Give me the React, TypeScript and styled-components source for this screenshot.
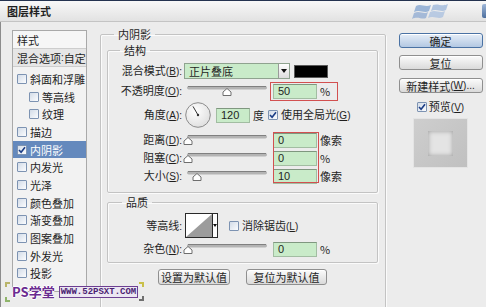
import React from "react";
import styled, { createGlobalStyle } from "styled-components";

const GlobalStyle = createGlobalStyle`
  html, body { margin: 0; padding: 0; background: #ececec; }
  body {
    font-family: "Noto Sans CJK SC", "Liberation Sans", sans-serif;
    font-size: 11px;
    color: #1f1f1f;
  }
`;

const Dialog = styled.div`
  position: relative;
  width: 486px;
  height: 307px;
  overflow: hidden;
  background: #ececec;
  box-shadow: inset 1px 0 0 #8c8c8c;
`;

const TitleBar = styled.div`
  height: 22px;
  box-sizing: border-box;
  border-top: 1px solid #243350;
  border-bottom: 1px solid #c4c4c4;
  background: linear-gradient(#f8f8f8, #e2e2e2);
  display: flex;
  align-items: center;
  padding-left: 7px;
`;

const Title = styled.div`
  flex: 1;
  font-weight: 700;
  font-size: 11px;
  line-height: 12px;
`;

const WinLogo = styled.svg`
  margin-right: 26px;
  opacity: 0.75;
`;

const CloseStub = styled.div`
  width: 4px;
  height: 14px;
  background: linear-gradient(#9fb7d8, #4d6f9e);
  border-radius: 2px 0 0 2px;
`;

const Body = styled.div`
  display: flex;
  align-items: flex-start;
  padding: 5px 0 0 12px;
`;

/* latin bits (hotkeys, colons) use a proportional latin face */
const Latin = styled.span`
  font-family: "Liberation Sans", sans-serif;
  font-size: 10px;
`;

const Hot = ({ k, colon }: { k: string; colon?: boolean }) => (
  <Latin>
    (<u>{k}</u>){colon ? ":" : ""}
  </Latin>
);

/* ---------- left style list ---------- */

const StyleList = styled.div`
  width: 75px;
  height: 262px;
  margin-top: 3px;
  flex-shrink: 0;
  box-sizing: border-box;
  border: 1px solid #a9a9a9;
  background: #f2f2f2;
  overflow: hidden;
`;

const ListHead = styled.div<{ $shade?: boolean }>`
  height: 18px;
  box-sizing: border-box;
  padding-left: 4px;
  display: flex;
  align-items: center;
  line-height: 12px;
  white-space: nowrap;
  background: ${(p) => (p.$shade ? "#e6e6e6" : "#f6f6f6")};
  border-bottom: 1px solid #cdcdcd;
`;

const ListItems = styled.div`
  padding-top: 3px;
`;

const ListItem = styled.div<{ $sub?: boolean; $sel?: boolean }>`
  height: 17.7px;
  display: flex;
  align-items: center;
  gap: 3px;
  padding-left: ${(p) => (p.$sub ? 16 : 4)}px;
  white-space: nowrap;
  line-height: 12px;
  background: ${(p) => (p.$sel ? "#6489bd" : "transparent")};
  color: ${(p) => (p.$sel ? "#ffffff" : "#1f1f1f")};
`;

/* ---------- checkbox ---------- */

const CheckBox = styled.span`
  width: 10px;
  height: 10px;
  box-sizing: border-box;
  flex-shrink: 0;
  display: inline-flex;
  align-items: center;
  justify-content: center;
  border: 1px solid #7d93b2;
  border-radius: 1px;
  background: linear-gradient(135deg, #d3dce8, #fbfcfe);
`;

const Check = ({ on }: { on?: boolean }) => (
  <CheckBox>
    {on && (
      <svg width="8" height="8" viewBox="0 0 8 8">
        <path d="M1 4 L3.1 6.3 L7 1.3" fill="none" stroke="#1b3d86" strokeWidth="1.6" />
      </svg>
    )}
  </CheckBox>
);

/* ---------- main panel ---------- */

type GroupProps = { $h?: number; $mt?: number; $pt?: number; $pb?: number; $pl?: number; $pr?: number };

const Group = styled.fieldset<GroupProps>`
  position: relative;
  margin: ${(p) => p.$mt ?? 0}px 0 0 0;
  padding: ${(p) => p.$pt ?? 0}px ${(p) => p.$pr ?? 0}px ${(p) => p.$pb ?? 0}px ${(p) => p.$pl ?? 0}px;
  min-width: 0;
  box-sizing: border-box;
  border: 1px solid #c3c3c3;
  border-radius: 2px;
  box-shadow: inset 1px 1px 0 #fbfbfb, 1px 1px 0 #fbfbfb;
  ${(p) => (p.$h ? `height: ${p.$h}px;` : "")}
`;

const Legend = styled.legend<{ $ml: number }>`
  margin-left: ${(p) => p.$ml}px;
  padding: 0 4px;
  font-size: 11px;
  line-height: 14px;
`;

const MainGroup = styled(Group)`
  width: 286px;
  margin-left: 13px;
  flex-shrink: 0;
`;

const Row = styled.div<{ $h: number; $mt?: number }>`
  height: ${(p) => p.$h}px;
  margin-top: ${(p) => p.$mt ?? 0}px;
  display: flex;
  align-items: center;
  white-space: nowrap;
  line-height: 13px;
`;

const Label = styled.span`
  width: 74px;
  flex-shrink: 0;
  text-align: right;
`;

const SelectBox = styled.div`
  width: 106px;
  height: 16px;
  margin-left: 2px;
  box-sizing: border-box;
  display: flex;
  border: 1px solid #8fa38f;
  background: #c9ebc9;
`;

const SelectText = styled.span`
  flex: 1;
  padding-left: 4px;
  line-height: 14px;
`;

const SelectArrow = styled.span`
  width: 10px;
  display: flex;
  align-items: center;
  justify-content: center;
  border-left: 1px solid #9a9a9a;
  background: linear-gradient(#ffffff, #dcdcdc);
`;

const Swatch = styled.div`
  width: 34px;
  height: 13px;
  margin-left: 4px;
  box-sizing: border-box;
  border: 1px solid #5a5a5a;
  background: #000;
`;

const SliderSvg = styled.svg`
  margin-left: 1px;
  flex-shrink: 0;
`;

const Slider = ({ at }: { at: number }) => (
  <SliderSvg width="86" height="14" viewBox="0 0 86 14">
    <rect x="4" y="2" width="80" height="3.5" rx="1.7" fill="#b4b4b4" />
    <rect x="5" y="2" width="78" height="1" fill="#808080" />
    <polygon
      points={`${at},4.5 ${at + 4},8 ${at + 4},11.5 ${at - 4},11.5 ${at - 4},8`}
      fill="#ffffff"
      stroke="#6e6e6e"
      strokeWidth="1"
    />
  </SliderSvg>
);

const NumBox = styled.span<{ $w?: number; $ml?: number }>`
  width: ${(p) => p.$w ?? 44}px;
  height: 15px;
  margin-left: ${(p) => p.$ml ?? 4}px;
  box-sizing: border-box;
  flex-shrink: 0;
  padding-left: 4px;
  font-family: "Liberation Sans", sans-serif;
  line-height: 13px;
  border: 1px solid #a2bda2;
  border-top-color: #7f977f;
  background: #c9ebc9;
`;

const Unit = styled.span`
  margin-left: 3px;
`;

const Highlight = styled.span`
  display: flex;
  align-items: center;
  margin-left: 1px;
  padding: 1px 7px 1px 2px;
  border: 1px solid #d25050;
`;

const Stack = styled.div`
  position: relative;
  margin-top: 3px;
`;

const RedFrame = styled.div`
  position: absolute;
  left: 165px;
  top: 1px;
  width: 46px;
  height: 51px;
  box-sizing: border-box;
  border: 1px solid #d25050;
`;

const Dial = styled.svg`
  margin-left: 3px;
  flex-shrink: 0;
`;

const Inline = styled.span<{ $ml: number }>`
  margin-left: ${(p) => p.$ml}px;
  display: inline-flex;
  align-items: center;
  gap: 3px;
`;

const Contour = styled.div`
  width: 33px;
  height: 25px;
  margin-left: 3px;
  box-sizing: border-box;
  display: flex;
  border: 1px solid #2a2a2a;
  background: #fff;
`;

const ContourArrow = styled.span`
  flex: 1;
  display: flex;
  align-items: center;
  justify-content: center;
  border-left: 1px solid #2a2a2a;
`;

const ButtonRow = styled.div`
  display: flex;
  justify-content: center;
  gap: 16px;
  margin-top: 6px;
`;

const Button = styled.div<{ $w?: number; $primary?: boolean }>`
  width: ${(p) => p.$w ?? 84}px;
  height: 16px;
  box-sizing: border-box;
  display: flex;
  align-items: center;
  justify-content: center;
  line-height: 12px;
  white-space: nowrap;
  border-radius: 3px;
  border: 1px solid ${(p) => (p.$primary ? "#4a72a4" : "#8f8f8f")};
  background: ${(p) =>
    p.$primary ? "linear-gradient(#e6eef8, #b3c8e2)" : "linear-gradient(#fbfbfb, #dadada)"};
  box-shadow: inset 0 1px 0 #ffffff;
`;

/* ---------- right column ---------- */

const Side = styled.div`
  width: 85px;
  margin-left: 12px;
  padding-top: 6px;
  display: flex;
  flex-direction: column;
  align-items: center;
`;

const SideButton = styled(Button)<{ $mt?: number }>`
  margin-top: ${(p) => p.$mt ?? 0}px;
  height: 15px;
`;

const PreviewToggle = styled.div`
  margin-top: 8px;
  height: 12px;
  display: flex;
  align-items: center;
  gap: 2px;
  line-height: 12px;
`;

const PreviewBox = styled.div`
  width: 55px;
  height: 50px;
  margin-top: 5px;
  box-sizing: border-box;
  display: flex;
  align-items: center;
  justify-content: center;
  border: 1px solid #e4e4e4;
  background: linear-gradient(135deg, #cecece, #c0c0c0);
`;

const PreviewSquare = styled.div`
  width: 25px;
  height: 25px;
  background: #e4e4e4;
  box-shadow: inset 0 0 5px #9c9c9c;
`;

/* ---------- watermark ---------- */

const Watermark = styled.div`
  position: absolute;
  left: 4px;
  top: 281px;
  display: flex;
  align-items: center;
`;

const Marks = styled.svg`
  flex-shrink: 0;
`;

const BrandName = styled.span`
  margin-left: 1px;
  font-weight: 700;
  font-size: 13px;
  line-height: 14px;
  color: #6a2b90;
  text-shadow: 1px 0 0 #fff, -1px 0 0 #fff, 0 1px 0 #fff, 0 -1px 0 #fff;
`;

const SiteTag = styled.span`
  margin-left: 4px;
  padding: 0 1px;
  height: 10px;
  line-height: 10px;
  font-family: "Liberation Mono", monospace;
  font-weight: 700;
  font-size: 9px;
  color: #4b1f72;
  background: #ece6f2;
  border: 1px solid #6d3f92;
`;

const items = [
  { t: "斜面和浮雕" },
  { t: "等高线", sub: true },
  { t: "纹理", sub: true },
  { t: "描边" },
  { t: "内阴影", on: true, sel: true },
  { t: "内发光" },
  { t: "光泽" },
  { t: "颜色叠加" },
  { t: "渐变叠加" },
  { t: "图案叠加" },
  { t: "外发光" },
  { t: "投影" },
];

const DownTri = ({ w = 6 }: { w?: number }) => (
  <svg width={w} height={w / 2 + 1} viewBox={`0 0 ${w} ${w / 2 + 1}`}>
    <polygon points={`0,0 ${w},0 ${w / 2},${w / 2 + 1}`} fill="#111" />
  </svg>
);

export default function App() {
  return (
    <Dialog>
      <GlobalStyle />
      <TitleBar>
        <Title>图层样式</Title>
        <WinLogo width="44" height="18" viewBox="0 0 44 18">
          <path d="M4 4 C9 1 13 6 19 3 L17 9 C12 12 8 7 2 10 Z" fill="#7fa2cf" />
          <path d="M21 3 C26 1 30 5 36 2 L34 8 C29 11 25 6 19 9 Z" fill="#9bb6da" />
          <path d="M2 11 C8 8 12 13 16 10 L14 16 C10 18 6 14 0 17 Z" fill="#8eaad2" />
          <path d="M18 10 C24 7 28 12 33 9 L31 15 C26 18 22 13 16 16 Z" fill="#a9c0e0" />
        </WinLogo>
        <CloseStub />
      </TitleBar>

      <Body>
        <StyleList>
          <ListHead>样式</ListHead>
          <ListHead $shade>
            混合选项<Latin>:</Latin>自定
          </ListHead>
          <ListItems>
            {items.map((it) => (
              <ListItem key={it.t} $sub={it.sub} $sel={it.sel}>
                <Check on={it.on} />
                {it.t}
              </ListItem>
            ))}
          </ListItems>
        </StyleList>

        <MainGroup $h={300} $pt={2} $pl={6} $pr={7}>
          <Legend $ml={7}>内阴影</Legend>

          <Group $pt={6} $pb={7}>
            <Legend $ml={12}>结构</Legend>
            <Row $h={16}>
              <Label>
                混合模式<Hot k="B" colon />
              </Label>
              <SelectBox>
                <SelectText>正片叠底</SelectText>
                <SelectArrow>
                  <DownTri w={6} />
                </SelectArrow>
              </SelectBox>
              <Swatch />
            </Row>
            <Row $h={18} $mt={3}>
              <Label>
                不透明度<Hot k="O" colon />
              </Label>
              <Slider at={44} />
              <Highlight>
                <NumBox $ml={0}>50</NumBox>
                <Unit>%</Unit>
              </Highlight>
            </Row>
            <Row $h={26} $mt={2}>
              <Label>
                角度<Hot k="A" colon />
              </Label>
              <Dial width="26" height="26" viewBox="0 0 26 26">
                <defs>
                  <radialGradient id="dialFill" cx="40%" cy="35%" r="70%">
                    <stop offset="0%" stopColor="#ffffff" />
                    <stop offset="100%" stopColor="#dedede" />
                  </radialGradient>
                </defs>
                <circle cx="13" cy="13" r="12.3" fill="url(#dialFill)" stroke="#8c8c8c" />
                <line x1="13" y1="13" x2="8" y2="4.4" stroke="#333" strokeWidth="1" />
                <circle cx="13" cy="13" r="1.2" fill="#333" />
              </Dial>
              <NumBox $w={34} $ml={5}>
                120
              </NumBox>
              <Unit>度</Unit>
              <Inline $ml={4}>
                <Check on />
                <span>
                  使用全局光<Hot k="G" />
                </span>
              </Inline>
            </Row>
            <Stack>
              <Row $h={18}>
                <Label>
                  距离<Hot k="D" colon />
                </Label>
                <Slider at={5} />
                <NumBox>0</NumBox>
                <Unit>像索</Unit>
              </Row>
              <Row $h={18}>
                <Label>
                  阻塞<Hot k="C" colon />
                </Label>
                <Slider at={5} />
                <NumBox>0</NumBox>
                <Unit>%</Unit>
              </Row>
              <Row $h={18}>
                <Label>
                  大小<Hot k="S" colon />
                </Label>
                <Slider at={14} />
                <NumBox>10</NumBox>
                <Unit>像索</Unit>
              </Row>
              <RedFrame />
            </Stack>
          </Group>

          <Group $mt={2} $pt={3} $pb={4}>
            <Legend $ml={14}>品质</Legend>
            <Row $h={27}>
              <Label>
                等高线<Latin>:</Latin>
              </Label>
              <Contour>
                <svg width="26" height="23" viewBox="0 0 26 23">
                  <polygon points="0,23 26,0 26,23" fill="#9c9c9c" />
                </svg>
                <ContourArrow>
                  <DownTri w={4} />
                </ContourArrow>
              </Contour>
              <Inline $ml={11}>
                <Check />
                <span>
                  消除锯齿<Hot k="L" />
                </span>
              </Inline>
            </Row>
            <Row $h={18} $mt={1}>
              <Label>
                杂色<Hot k="N" colon />
              </Label>
              <Slider at={5} />
              <NumBox>0</NumBox>
              <Unit>%</Unit>
            </Row>
          </Group>

          <ButtonRow>
            <Button $w={72}>设置为默认值</Button>
            <Button $w={81}>复位为默认值</Button>
          </ButtonRow>
        </MainGroup>

        <Side>
          <SideButton $primary>确定</SideButton>
          <SideButton $mt={7}>复位</SideButton>
          <SideButton $mt={8}>
            新建样式<Hot k="W" />
            <Latin>...</Latin>
          </SideButton>
          <PreviewToggle>
            <Check on />
            <span>
              预览<Hot k="V" />
            </span>
          </PreviewToggle>
          <PreviewBox>
            <PreviewSquare />
          </PreviewBox>
        </Side>
      </Body>

      <Watermark>
        <Marks width="7" height="22" viewBox="0 0 7 22">
          <path d="M1 1 H6 V3 H3 V6 H1 Z" fill="#b9b46a" />
          <path d="M1 16 H3 V19 H6 V21 H1 Z" fill="#8fb46a" />
        </Marks>
        <BrandName>PS学堂</BrandName>
        <SiteTag>WWW.52PSXT.COM</SiteTag>
        <Marks width="7" height="22" viewBox="0 0 7 22">
          <path d="M1 1 H6 V6 H4 V3 H1 Z" fill="#c9c04a" />
          <path d="M4 15 H6 V20 H1 V18 H4 Z" fill="#6f6f6f" />
        </Marks>
      </Watermark>
    </Dialog>
  );
}
